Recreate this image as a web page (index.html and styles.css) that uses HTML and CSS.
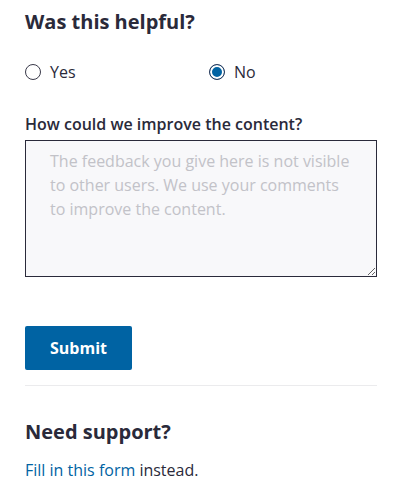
FILE: index.html
```html
<!DOCTYPE html>
<html lang="en">
<head>
<meta charset="utf-8">
<link rel="stylesheet" href="styles.css">
</head>
<body>
<div class="feedback">
  <h2 class="title">Was this helpful?</h2>
  <div class="choices">
    <label class="choice"><input type="radio" name="helpful" class="radio"><span>Yes</span></label>
    <label class="choice"><input type="radio" name="helpful" class="radio" checked><span>No</span></label>
  </div>
  <label class="field-label" for="fb">How could we improve the content?</label>
  <textarea id="fb" class="field" placeholder="The feedback you give here is not visible to other users. We use your comments to improve the content."></textarea>
  <button class="submit" type="button">Submit</button>
  <hr class="divider">
  <h2 class="title support">Need support?</h2>
  <p class="support-text"><a href="#" class="link">Fill in this form</a> instead.</p>
</div>
</body>
</html>
```
FILE: styles.css
```css
* { box-sizing: border-box; }
html, body { margin: 0; padding: 0; background: #ffffff; }
body {
  font-family: "Open Sans", "Liberation Sans", sans-serif;
  color: #2a2a3a;
}
.feedback {
  width: 352px;
  margin-left: 25px;
  padding-top: 8px;
  display: flex;
  flex-direction: column;
  align-items: flex-start;
}
.title {
  margin: 0;
  font-size: 20px;
  line-height: 28px;
  font-weight: 700;
  color: #2a2a3a;
}
.choices {
  display: grid;
  grid-template-columns: 184px 1fr;
  width: 100%;
  margin-top: 24px;
}
.choice {
  display: flex;
  align-items: center;
  gap: 9px;
  font-size: 16px;
  line-height: 24px;
  font-weight: 500;
}
.radio {
  appearance: none;
  -webkit-appearance: none;
  margin: 0;
  width: 16px;
  height: 16px;
  border: 1.5px solid #3a3a4a;
  border-radius: 50%;
  background: #fff;
}
.radio:checked {
  border-color: #2a3a5a;
  background: #0063a3;
  box-shadow: inset 0 0 0 2px #fff;
}
.field-label {
  margin-top: 28px;
  font-size: 16px;
  line-height: 24px;
  font-weight: 600;
}
.field {
  margin-top: 4px;
  width: 352px;
  height: 137px;
  border: 1.5px solid #2a2a3a;
  background: #f8f8fa;
  border-radius: 0;
  padding: 8px 24px;
  font-family: inherit;
  font-size: 16px;
  line-height: 24px;
  resize: vertical;
  color: #2a2a3a;
}
.field::placeholder { color: #c2c2c8; }
.submit {
  margin-top: 49px;
  width: 107px;
  height: 44px;
  border: 0;
  border-radius: 2px;
  background: #0063a3;
  color: #ffffff;
  font-family: inherit;
  font-size: 16px;
  font-weight: 700;
}
.divider {
  width: 100%;
  margin: 15px 0 0;
  border: 0;
  border-top: 1px solid #ebebed;
}
.support { margin-top: 32px; }
.support-text {
  margin: 12px 0 0;
  font-size: 16px;
  line-height: 24px;
}
.link { color: #0063a3; text-decoration: none; }
```
